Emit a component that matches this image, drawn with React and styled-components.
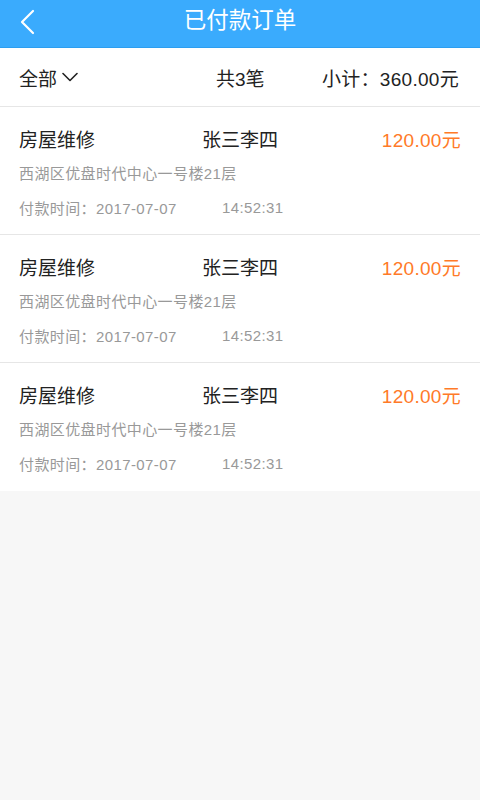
import React from 'react';
import styled, { createGlobalStyle } from 'styled-components';

const GlobalStyle = createGlobalStyle`
  * {
    margin: 0;
    padding: 0;
    box-sizing: border-box;
  }

  body {
    background: #f7f7f7;
    font-family: 'Liberation Sans', 'Noto Sans CJK SC', sans-serif;
    color: #222;
  }
`;

const Page = styled.div`
  min-height: 800px;
  background: #f7f7f7;
`;

const Header = styled.header`
  height: 48px;
  background: #3aabfd;
  border-bottom: 1px solid #2c9ef0;
  display: flex;
  align-items: center;
  justify-content: center;
  position: relative;
  color: #fff;
`;

const BackButton = styled.button`
  position: absolute;
  left: 14px;
  top: 8px;
  width: 26px;
  height: 28px;
  border: none;
  background: transparent;
  display: flex;
  align-items: center;
  justify-content: center;
`;

const Title = styled.h1`
  font-size: 22.5px;
  font-weight: normal;
  line-height: 1;
  margin-top: -4px;
`;

const FilterBar = styled.div`
  height: 59px;
  background: #fff;
  border-bottom: 1px solid #e6e6e6;
  display: flex;
  align-items: center;
  padding: 0 21px 0 19px;
  font-size: 19px;
`;

const FilterSelect = styled.div`
  width: 197px;
  display: flex;
  align-items: center;
  gap: 5px;
`;

const Count = styled.div`
  flex: 1;
`;

const Subtotal = styled.div`
  letter-spacing: 0.3px;
`;

const List = styled.div`
  background: #fff;
`;

const Order = styled.div`
  height: 128px;
  padding: 18px 19px 0 19px;
  border-bottom: ${p => (p.last ? 'none' : '1px solid #e6e6e6')};
`;

const TopRow = styled.div`
  display: flex;
  align-items: center;
  font-size: 19px;
  height: 26px;
`;

const Service = styled.div`
  width: 183px;
`;

const Person = styled.div`
  flex: 1;
`;

const Amount = styled.div`
  color: #ff7a28;
  letter-spacing: 0.3px;
`;

const Info = styled.div`
  font-size: 15px;
  letter-spacing: 0.4px;
  color: #999;
  margin-top: ${p => p.gap}px;
  height: 20px;
  display: flex;
  align-items: center;
`;

const DateText = styled.span`
  width: 203px;
`;

const orders = [1, 2, 3];

function App() {
  return (
    <>
      <GlobalStyle />
      <Page>
        <Header>
          <BackButton>
            <svg width="16" height="26" viewBox="0 0 16 26" fill="none">
              <path d="M14 2 L3 13 L14 24" stroke="#fff" strokeWidth="2.2" strokeLinecap="round" strokeLinejoin="round" />
            </svg>
          </BackButton>
          <Title>已付款订单</Title>
        </Header>

        <FilterBar>
          <FilterSelect>
            全部
            <svg width="16" height="10" viewBox="0 0 16 10" fill="none">
              <path d="M1 1.5 L8 8.5 L15 1.5" stroke="#222" strokeWidth="1.6" strokeLinecap="round" strokeLinejoin="round" />
            </svg>
          </FilterSelect>
          <Count>共3笔</Count>
          <Subtotal>小计：360.00元</Subtotal>
        </FilterBar>

        <List>
          {orders.map((o, i) => (
            <Order key={o} last={i === orders.length - 1}>
              <TopRow>
                <Service>房屋维修</Service>
                <Person>张三李四</Person>
                <Amount>120.00元</Amount>
              </TopRow>
              <Info gap={11}>西湖区优盘时代中心一号楼21层</Info>
              <Info gap={15}>
                <DateText>付款时间：2017-07-07</DateText>
                <span>14:52:31</span>
              </Info>
            </Order>
          ))}
        </List>
      </Page>
    </>
  );
}

export default App;
